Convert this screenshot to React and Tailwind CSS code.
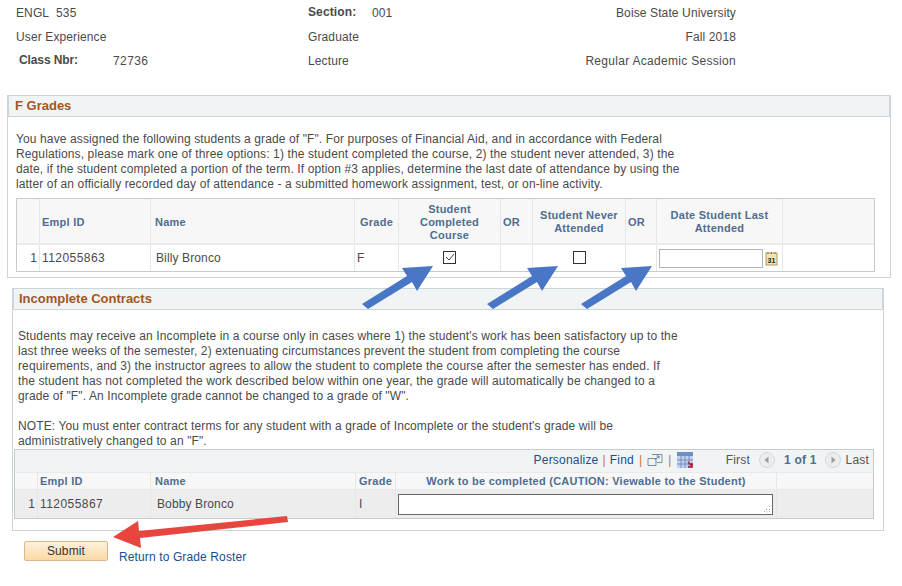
import React from 'react';

const fGradeCols = 'grid-cols-[23px_111px_204px_44px_102px_32px_93px_31px_126px_1fr]';
const incCols = 'grid-cols-[23px_113px_205px_40px_381px_1fr]';

function Head({ children, className = '' }) {
  return (
    <div className={`flex items-center justify-center border-r border-[#e4e7e9] px-1 text-center text-[11px] font-bold leading-[13px] tracking-[0.25px] text-[#4f6d91] ${className}`}>
      {children}
    </div>
  );
}

function Cell({ children, className = '' }) {
  return <div className={`flex items-center border-r border-[#e4e7e9] ${className}`}>{children}</div>;
}

function PanelTitle({ children, className = 'px-[6px]' }) {
  return (
    <div className={`flex h-[22px] items-center border border-[#ccd6da] bg-[#f0f4f5] text-[13px] font-bold tracking-normal text-[#a4561f] ${className}`}>
      {children}
    </div>
  );
}

// blue arrows pointing up and right
function BlueArrow({ className }) {
  return (
    <svg className={`absolute ${className}`} width="72" height="44" viewBox="0 0 72 44">
      <polygon fill="#4a76c6" points="71,0 40,2 45,10 0,38 6,43 50,16 55,25" />
    </svg>
  );
}

function CalendarIcon() {
  return (
    <svg width="13" height="15" viewBox="0 0 13 15" className="ml-[2px]">
      <rect x="1" y="2" width="11" height="12" fill="#efe3b8" stroke="#b39a56" />
      <path d="M3 1v2M6.500 1v2M10 1v2" stroke="#8a7436" />
      <text x="2.500" y="11.500" fontSize="7" fontWeight="700" fill="#222" fontFamily="Liberation Sans, sans-serif">31</text>
    </svg>
  );
}

function ExpandIcon() {
  return (
    <svg width="16" height="15" viewBox="0 0 16 15">
      <path d="M5 1.500h10v8H10M1 5.500h8v7H1z" fill="none" stroke="#7f8d9d" />
      <path d="M8 7l4-4M9.500 3H12v2.500" fill="none" stroke="#5c7ba0" />
    </svg>
  );
}

function GridIcon() {
  return (
    <svg width="17" height="17" viewBox="0 0 17 17">
      <rect width="16" height="4" fill="#6f8fc9" />
      <rect y="4" width="16" height="12" fill="#c3d0e6" />
      <path d="M0 8h16M0 12h16M4 4v12M8 4v12M12 4v12" stroke="#6f8fc9" />
      <path d="M11 10l4 4M15 11v4h-4" fill="none" stroke="#b3172a" strokeWidth="1.600" />
    </svg>
  );
}

function PageIcon({ next }) {
  return (
    <svg width="16" height="16" viewBox="0 0 16 16">
      <circle cx="8" cy="8" r="7.500" fill="#eceded" stroke="#d5d7d8" />
      <path d={next ? 'M6.500 4.500L10.500 8l-4 3.500z' : 'M9.500 4.500L5.500 8l4 3.500z'} fill="#9a9c9e" />
    </svg>
  );
}

export default function App() {
  return (
    <div className="relative h-[586px] w-[902px] overflow-hidden bg-white font-['Liberation_Sans',Arial,sans-serif] text-[12px] tracking-[0.12px] text-[#4a4a4a]">
      <div className="grid h-[95px] grid-cols-[292px_1fr_166px] content-start pl-[16px] pr-[166px] pt-[1px] leading-[24px]">
        <div>
          <div>ENGL&nbsp; 535</div>
          <div>User Experience</div>
          <div className="flex"><span className="ml-[3px] mt-[-1px] w-[94px] font-bold tracking-[-0.1px]">Class Nbr:</span><span className="tracking-[0.4px]">72736</span></div>
        </div>
        <div>
          <div className="flex"><span className="mt-[-1px] w-[64px] font-bold">Section:</span><span>001</span></div>
          <div>Graduate</div>
          <div>Lecture</div>
        </div>
        <div className="col-start-3 text-right">
          <div className="whitespace-nowrap">Boise State University</div>
          <div>Fall 2018</div>
          <div className="ml-[-60px] whitespace-nowrap tracking-[0.3px]">Regular Academic Session</div>
        </div>
      </div>

      {/* F Grades */}
      <div className="ml-[7px] h-[183px] w-[884px] border border-[#ccd6da] border-t-0">
        <PanelTitle>F Grades</PanelTitle>
        <div className="px-[8px] pt-[15px] leading-[15px]">
          <div>You have assigned the following students a grade of "F". For purposes of Financial Aid, and in accordance with Federal</div>
          <div>Regulations, please mark one of three options: 1) the student completed the course, 2) the student never attended, 3) the</div>
          <div>date, if the student completed a portion of the term. If option #3 applies, determine the last date of attendance by using the</div>
          <div>latter of an officially recorded day of attendance - a submitted homework assignment, test, or on-line activity.</div>
        </div>
        <div className="ml-[8px] mt-[6px] w-[859px] border border-[#c5ccd0]">
          <div className={`grid h-[46px] ${fGradeCols} border-b-2 border-[#e8eaeb] bg-[#f7f7f7]`}>
            <Head />
            <Head className="!justify-start !pl-[2px] pt-[2px]">Empl ID</Head>
            <Head className="!justify-start pt-[2px]">Name</Head>
            <Head className="pt-[2px]">Grade</Head>
            <Head className="pt-[2px]">Student<br />Completed<br />Course</Head>
            <Head className="!justify-start !pl-[2px] pt-[2px]">OR</Head>
            <Head className="pt-[2px]">Student Never<br />Attended</Head>
            <Head className="!justify-start !pl-[2px] pt-[2px]">OR</Head>
            <Head className="pt-[2px]">Date Student Last<br />Attended</Head>
            <div />
          </div>
          <div className={`grid h-[26px] ${fGradeCols}`}>
            <Cell className="justify-end pr-[2px]">1</Cell>
            <Cell className="pl-[2px] tracking-[0.45px]">112055863</Cell>
            <Cell className="pl-[5px]">Billy Bronco</Cell>
            <Cell className="pl-[2px]">F</Cell>
            <Cell className="justify-center pb-[2px]">
              <div className="flex h-[13px] w-[13px] items-center justify-center border border-[#333]">
                <svg width="11" height="11" viewBox="0 0 11 11"><path d="M2 5l3 3 5-6" fill="none" stroke="#444" /></svg>
              </div>
            </Cell>
            <Cell />
            <Cell className="justify-center pb-[2px]"><div className="h-[13px] w-[13px] border border-[#333]" /></Cell>
            <Cell />
            <Cell className="pl-[2px]">
              <div className="h-[19px] w-[104px] border border-[#b5b5b5] bg-white" />
              <CalendarIcon />
            </Cell>
            <div />
          </div>
        </div>
      </div>

      {/* Incomplete Contracts */}
      <div className="ml-[12px] mt-[10px] h-[243px] w-[872px] border border-[#ccd6da] border-t-0">
        <PanelTitle className="px-[5px]">Incomplete Contracts</PanelTitle>
        <div className="px-[5px] pt-[19px] leading-[15px]">
          <div>Students may receive an Incomplete in a course only in cases where 1) the student's work has been satisfactory up to the</div>
          <div>last three weeks of the semester, 2) extenuating circumstances prevent the student from completing the course</div>
          <div>requirements, and 3) the instructor agrees to allow the student to complete the course after the semester has ended. If</div>
          <div>the student has not completed the work described below within one year, the grade will automatically be changed to a</div>
          <div>grade of "F". An Incomplete grade cannot be changed to a grade of "W".</div>
          <div className="h-[15px]" />
          <div>NOTE: You must enter contract terms for any student with a grade of Incomplete or the student's grade will be</div>
          <div>administratively changed to an "F".</div>
        </div>
        <div className="ml-[1px] w-[860px] border border-[#c5ccd0]">
          <div className="flex h-[22px] items-center justify-end gap-[5px] bg-[#f1f4f5] pb-[2px] pr-[4px] tracking-[0.2px] text-[#14508f]">
            <span>Personalize</span><span className="ml-[-1px] mr-[-1px] text-[#c8762c]">|</span>
            <span>Find</span><span className="text-[#c8762c]">|</span>
            <ExpandIcon /><span className="text-[#c8762c]">|</span>
            <GridIcon />
            <span className="ml-[27px] text-[#555]">First</span>
            <span className="ml-[4px]"><PageIcon /></span>
            <span className="ml-[4px] font-bold text-[#4f6d91]">1 of 1</span>
            <span className="ml-[3px]"><PageIcon next /></span>
            <span className="text-[#555]">Last</span>
          </div>
          <div className={`grid h-[18px] ${incCols} border-y border-[#e8eaeb] bg-[#f7f7f7]`}>
            <Head />
            <Head className="!justify-start !pl-[2px]">Empl ID</Head>
            <Head className="!justify-start">Name</Head>
            <Head>Grade</Head>
            <Head>Work to be completed (CAUTION: Viewable to the Student)</Head>
            <div />
          </div>
          <div className={`grid h-[28px] ${incCols} bg-[#ededed]`}>
            <Cell className="justify-end pr-[2px]">1</Cell>
            <Cell className="pl-[2px] tracking-[0.45px]">112055867</Cell>
            <Cell className="pl-[6px]">Bobby Bronco</Cell>
            <Cell className="pl-[3px]">I</Cell>
            <Cell className="pl-[2px]">
              <div className="relative h-[21px] w-[375px] border border-[#666] bg-white">
                <svg className="absolute bottom-[1px] right-[1px]" width="8" height="8" viewBox="0 0 8 8">
                  <path d="M6 1h1v1H6zM3 4h1v1H3zM6 4h1v1H6zM1 6h1v1H1zM3.500 6.500h1v1h-1zM6 6h1v1H6z" fill="#aaa" />
                </svg>
              </div>
            </Cell>
            <div />
          </div>
        </div>
      </div>

      <div className="ml-[24px] mt-[10px] flex items-start">
        <button className="h-[20px] w-[84px] rounded-[2px] border border-[#d9b98a] bg-gradient-to-b from-[#fdf0dc] to-[#fbd9a4] text-[12px] text-[#333]">
          Submit
        </button>
        <a className="ml-[11px] mt-[7px] text-[#14508f]">Return to Grade Roster</a>
      </div>

      <BlueArrow className="left-[362px] top-[266px]" />
      <BlueArrow className="left-[487px] top-[266px]" />
      <BlueArrow className="left-[581px] top-[266px]" />
      <svg className="absolute left-[113px] top-[516px]" width="176" height="33" viewBox="0 0 176 33">
        <polygon fill="#e8453f" points="0,21 25,5 26,15 174,0 175,6 27,22 28,32" />
      </svg>
    </div>
  );
}
